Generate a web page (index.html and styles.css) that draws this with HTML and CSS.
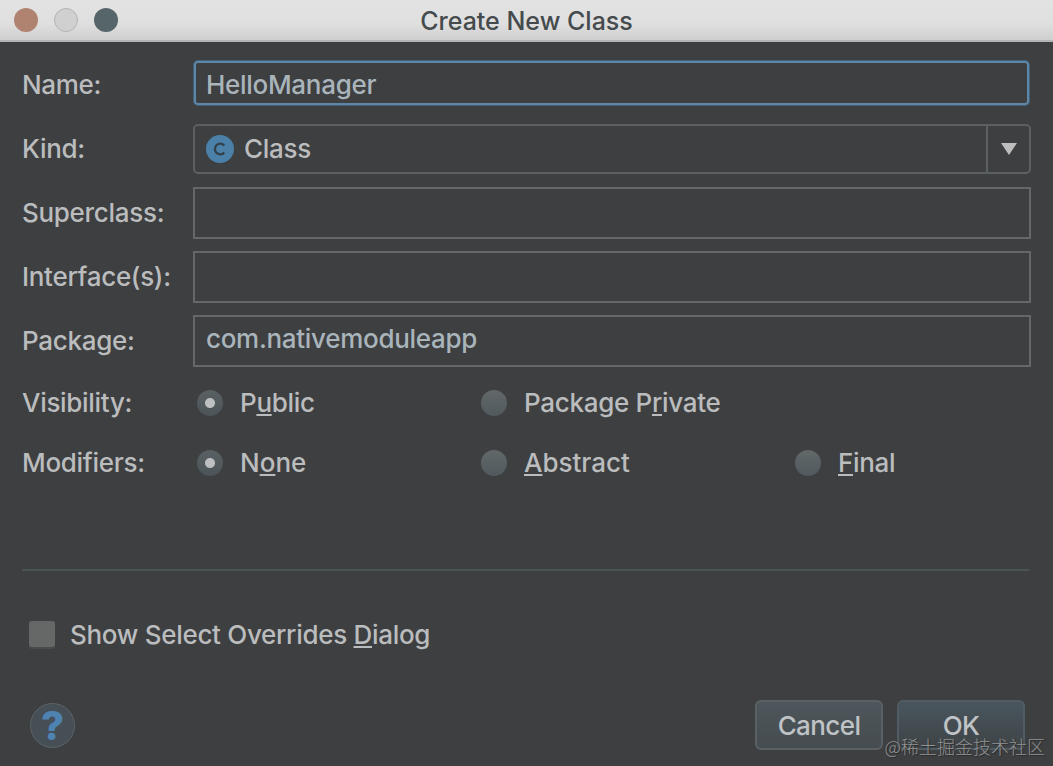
FILE: index.html
```html
<!DOCTYPE html>
<html lang="en">
<head>
  <meta charset="UTF-8" />
  <meta name="viewport" content="width=device-width, initial-scale=1.0"/>
  <title>Create New Class</title>
  <link rel="stylesheet" href="styles.css">
</head>
<body>
  <div class="dialog">
    <header class="titlebar">
      <div class="lights">
        <span class="light close"></span>
        <span class="light minimize"></span>
        <span class="light zoom"></span>
      </div>
      <h1>Create New Class</h1>
    </header>

    <form class="form">
      <div class="row">
        <label for="name">Name:</label>
        <input type="text" id="name" class="field focused" value="HelloManager" spellcheck="false">
      </div>
      <div class="row">
        <label>Kind:</label>
        <div class="select">
          <svg class="classIcon" width="28" height="28" viewBox="0 0 28 28">
            <circle cx="14" cy="14" r="14" fill="#4b80a9"/>
            <path d="M18.3 10.6A5.3 5.3 0 1 0 18.3 17.4" fill="none" stroke="#34424c" stroke-width="2.3"/>
          </svg>
          <span class="selectText">Class</span>
          <span class="arrow">
            <svg width="16" height="12" viewBox="0 0 16 12"><path d="M0 0H16L8 12Z" fill="#bdbdbd"/></svg>
          </span>
        </div>
      </div>
      <div class="row">
        <label for="superclass">Superclass:</label>
        <input type="text" id="superclass" class="field">
      </div>
      <div class="row">
        <label for="interfaces">Interface(s):</label>
        <input type="text" id="interfaces" class="field">
      </div>
      <div class="row">
        <label for="package">Package:</label>
        <input type="text" id="package" class="field package" value="com.nativemoduleapp" spellcheck="false">
      </div>

      <div class="radios">
        <span class="radioLabel">Visibility:</span>
        <span class="option"><i class="radio checked"></i><span>P<u>u</u>blic</span></span>
        <span class="option"><i class="radio"></i><span>Package P<u>r</u>ivate</span></span>
      </div>
      <div class="radios">
        <span class="radioLabel">Modifiers:</span>
        <span class="option wide"><i class="radio checked"></i><span>N<u>o</u>ne</span></span>
        <span class="option wide"><i class="radio"></i><span><u>A</u>bstract</span></span>
        <span class="option"><i class="radio"></i><span><u>F</u>inal</span></span>
      </div>
    </form>

    <div class="overrides">
      <i class="checkbox"></i>
      <span>Show Select Overrides <u>D</u>ialog</span>
    </div>

    <footer class="footer">
      <button class="help" aria-label="Help">?</button>
      <button class="btn">Cancel</button>
      <button class="btn ok">OK</button>
    </footer>
    <div class="watermark">@稀土掘金技术社区</div>
  </div>
</body>
</html>
```
FILE: styles.css
```css
* {
  margin: 0;
  padding: 0;
  box-sizing: border-box;
}

body {
  height: 766px;
  overflow: hidden;
  background: #3d3f41;
  color: #bbbcbd;
  font-family: 'Inter', 'Noto Sans CJK SC', sans-serif;
  font-size: 26px;
  font-weight: 450;
  line-height: 32px;
  letter-spacing: -0.3px;
}

.dialog {
  position: relative;
  height: 766px;
  display: flex;
  flex-direction: column;
}

/* Title bar */
.titlebar {
  display: grid;
  grid-template-columns: 120px 1fr 120px;
  align-items: center;
  height: 42px;
  background: linear-gradient(to bottom, #e3e3e3 0, #dfdfdf 24px, #cfcfcf 40px);
  border-bottom: 2px solid #b5b5b5;
}

.titlebar h1 {
  padding-top: 1px;
  text-align: center;
  font-size: 25px;
  font-weight: 450;
  letter-spacing: 0;
  color: #454a4d;
}

.lights {
  display: flex;
  gap: 16px;
  padding-left: 14px;
}

.light {
  width: 24px;
  height: 24px;
  border-radius: 50%;
}

.close {
  background: #b08370;
}

.minimize {
  background: #d0d0d0;
  border: 1px solid #b5b2b2;
}

.zoom {
  background: #56656a;
}

/* Form rows */
.form {
  padding: 17px 22px 0;
}

.row {
  display: grid;
  grid-template-columns: 171px 838px;
  align-items: center;
  height: 52px;
  margin-bottom: 12px;
}

.field {
  width: 838px;
  height: 52px;
  padding: 0 11px;
  border: 2px solid #646667;
  background: transparent;
  outline: none;
  color: #a9b4bb;
  font: inherit;
  letter-spacing: inherit;
}

.focused {
  width: 835px;
  height: 44px;
  margin: 0 0 4px 1px;
  padding: 2px 10px 0;
  border: 2px solid #5e86a6;
  border-radius: 4px;
  box-shadow: 0 0 0 1px #42607a;
}

.package {
  padding-bottom: 5px;
}

.select {
  display: flex;
  align-items: center;
  height: 50px;
  margin-bottom: 1px;
  padding-left: 11px;
  border: 2px solid #5b6162;
  border-radius: 5px;
}

.selectText {
  flex: 1;
  margin-left: 10px;
}

.arrow {
  display: flex;
  align-items: center;
  justify-content: center;
  width: 43px;
  height: 46px;
  border-left: 2px solid #5b6162;
}

/* Radio groups */
.radios {
  display: grid;
  grid-template-columns: 175px 284px 314px 1fr;
  align-items: center;
  height: 60px;
}

.row + .radios {
  margin-top: -6px;
}

.option {
  display: flex;
  align-items: center;
  gap: 17px;
}

.wide {
  letter-spacing: 0;
}

.radio {
  width: 26px;
  height: 26px;
  border-radius: 50%;
  background: linear-gradient(#626869, #50595d);
}

.checked {
  background: radial-gradient(circle, #bebfc0 4.5px, transparent 5.5px), linear-gradient(#596163, #4b5458);
}

u {
  text-decoration-thickness: 2px;
  text-underline-offset: 2px;
  text-decoration-skip-ink: none;
}

.overrides {
  display: flex;
  align-items: center;
  gap: 15px;
  height: 130px;
  margin: 76px 24px 0 22px;
  padding-left: 7px;
  border-top: 2px solid #4b5455;
}

.checkbox {
  width: 26px;
  height: 26px;
  margin-bottom: 2px;
  border-radius: 3px;
  background: #666867;
  box-shadow: 0 2px 0 #484c4d;
}

/* Bottom buttons */
.footer {
  display: flex;
  align-items: center;
  gap: 14px;
  padding: 1px 28px 0 30px;
}

.help {
  width: 45px;
  height: 45px;
  margin-right: auto;
  border: 1px solid #5c6468;
  border-radius: 50%;
  background: #464f55;
  color: #4e83b1;
  font: 800 40px/43px 'Inter', sans-serif;
}

.btn {
  width: 128px;
  height: 50px;
  padding-top: 2px;
  border: 2px solid #596164;
  border-radius: 6px;
  background: linear-gradient(#4d565b, #464c50);
  color: #bfc3c5;
  font: inherit;
  letter-spacing: -0.6px;
}

.ok {
  background: linear-gradient(#49555e, #3f4447);
  border-color: #505c63;
}

.watermark {
  position: absolute;
  right: 8px;
  bottom: 7px;
  color: #909293;
  font: 300 18px/26px 'Noto Sans CJK SC', sans-serif;
  letter-spacing: 0;
  text-shadow: 1px 1px 1px #292b2c;
}
```
